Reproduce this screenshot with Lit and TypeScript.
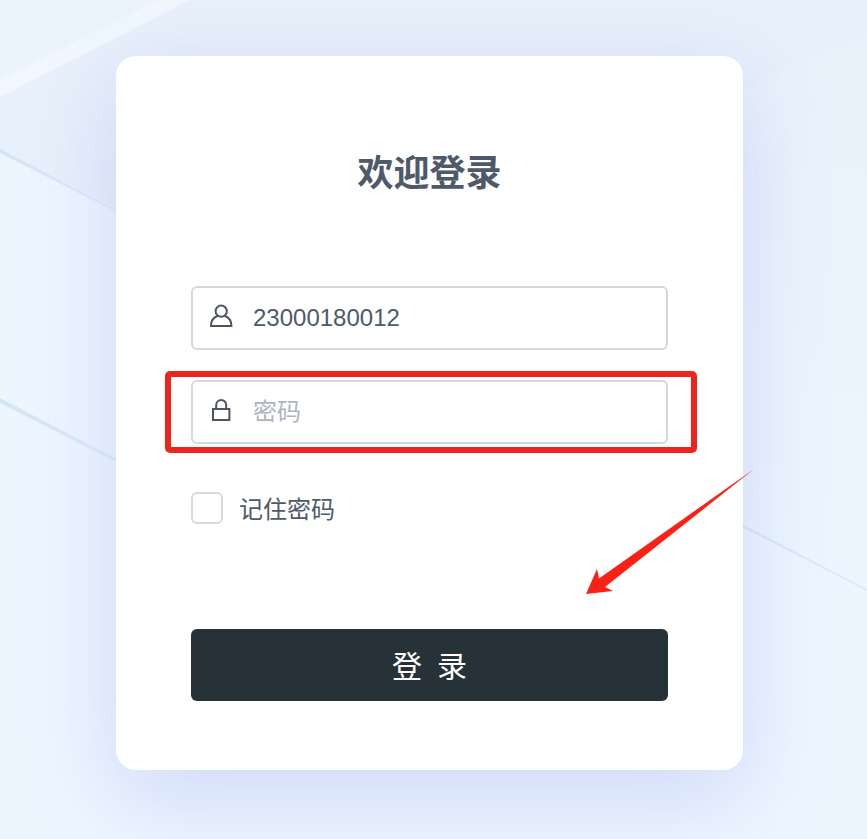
import { LitElement, html, css, svg } from "lit";
import { customElement, state } from "lit/decorators.js";

const userIcon = svg`<svg class="icon" viewBox="0 0 24 24" aria-hidden="true">
  <circle cx="12.2" cy="7.2" r="5.6"></circle>
  <path d="M8.8 11.8C4.8 13.2 2 17 2 22H22.400C22.400 17 19.600 13.200 15.600 11.800"></path>
</svg>`;

const lockIcon = svg`<svg class="icon" viewBox="0 0 24 24" aria-hidden="true">
  <rect x="4" y="11" width="16.4" height="11"></rect>
  <path d="M7.2 11V7a5 5 0 0 1 10 0V11"></path>
</svg>`;

@customElement("app-root")
export class AppRoot extends LitElement {
  static styles = css`
    :host {
      display: block;
      position: relative;
      box-sizing: border-box;
      min-height: 100vh;
      padding: 56px 124px 69px 116px;
      overflow: hidden;
      background: #edf6ff;
      color: #4e5969;
      font-family: "Liberation Sans", "Noto Sans CJK SC", sans-serif;
    }
    .backdrop {
      position: absolute;
      inset: 0;
      width: 100%;
      height: 100%;
    }
    .card {
      position: relative;
      padding: 94px 75px 69px;
      border-radius: 20px;
      background: #fff;
      box-shadow: 0 28px 90px rgba(92, 98, 218, 0.2);
    }
    .title {
      margin: 0 0 88px;
      font-size: 36px;
      line-height: 48px;
      font-weight: 700;
      text-align: center;
    }
    .form {
      display: flex;
      flex-direction: column;
    }
    .field {
      position: relative;
      display: flex;
      align-items: center;
      gap: 20px;
      box-sizing: border-box;
      height: 64px;
      margin-bottom: 30px;
      padding: 0 16px;
      border: 2px solid #d5d8e1;
      border-radius: 6px;
    }
    .field.marked {
      margin-bottom: 48px;
    }
    .icon {
      flex: none;
      width: 24px;
      height: 24px;
      margin-bottom: 4px;
      fill: none;
      stroke: #4c5466;
      stroke-width: 2;
    }
    .input {
      flex: 1;
      min-width: 0;
      height: 40px;
      padding: 0;
      border: 0;
      outline: 0;
      background: none;
      color: inherit;
      font: inherit;
      font-size: 24px;
    }
    .input::placeholder {
      color: #aeb4bf;
      opacity: 1;
    }
    .mark {
      position: absolute;
      inset: -11px -31px -11px -28px;
      border: 6px solid #ee251c;
      border-radius: 5px;
      pointer-events: none;
    }
    .remember {
      display: flex;
      align-items: center;
      align-self: flex-start;
      gap: 16px;
      height: 32px;
      margin-bottom: 105px;
      font-size: 24px;
      line-height: 36px;
    }
    .remember-text {
      padding-top: 3px;
    }
    .check {
      appearance: none;
      width: 32px;
      height: 32px;
      margin: 0;
      border: 2px solid #d8dade;
      border-radius: 6px;
      background: #fff;
    }
    .check:checked {
      background: #263238;
    }
    .submit {
      height: 72px;
      padding: 0 0 2px;
      border: 0;
      border-radius: 6px;
      background: #273238;
      color: #fff;
      font: inherit;
      font-size: 30px;
    }
    .arrow {
      position: absolute;
      top: 413px;
      right: -11px;
      width: 168px;
      height: 126px;
      fill: #fb2116;
      pointer-events: none;
    }
  `;

  @state() private account = "23000180012";

  render() {
    return html`
      <svg class="backdrop" viewBox="0 0 867 839" preserveAspectRatio="none" aria-hidden="true">
        <defs>
          <linearGradient id="streak" x1="0" y1="0" x2="1" y2="0">
            <stop offset="0" stop-color="#d2e4f5"></stop>
            <stop offset="1" stop-color="#e4edf8"></stop>
          </linearGradient>
          <linearGradient id="pane" x1="0" y1="0" x2="0" y2="1">
            <stop offset="0" stop-color="#e9f2fb"></stop>
            <stop offset="1" stop-color="#edf6ff"></stop>
          </linearGradient>
        </defs>
        <path d="M0 0H867V590L0 150Z" fill="#e8f0fb"></path>
        <path d="M0 0H190L0 97Z" fill="#f0f7fe"></path>
        <path d="M0 0H158L0 80Z" fill="#ebf4fc"></path>
        <path d="M867 36L600 155V453L867 590Z" fill="url(#pane)"></path>
        <path d="M0 149L130 217V219L0 153Z" fill="url(#streak)"></path>
        <path d="M0 398L130 466V469L0 403Z" fill="url(#streak)"></path>
        <path d="M730 518L867 589V591L730 521Z" fill="#dde9f7"></path>
      </svg>
      <main class="card">
        <h1 class="title">欢迎登录</h1>
        <form class="form" @submit=${(e: Event) => e.preventDefault()}>
          <label class="field">
            ${userIcon}
            <input
              class="input"
              type="text"
              aria-label="账号"
              .value=${this.account}
              @input=${(e: Event) => (this.account = (e.target as HTMLInputElement).value)}
            />
          </label>
          <label class="field marked">
            ${lockIcon}
            <input class="input" type="password" aria-label="密码" placeholder="密码" />
            <span class="mark"></span>
          </label>
          <label class="remember">
            <input class="check" type="checkbox" />
            <span class="remember-text">记住密码</span>
          </label>
          <button class="submit" type="submit">登&ensp;录</button>
        </form>
        <svg class="arrow" viewBox="0 0 168 126" aria-hidden="true">
          <path d="M0 125L11 100L13 109.500L168 0L100 54L19 118L27 122Z"></path>
        </svg>
      </main>
    `;
  }
}
